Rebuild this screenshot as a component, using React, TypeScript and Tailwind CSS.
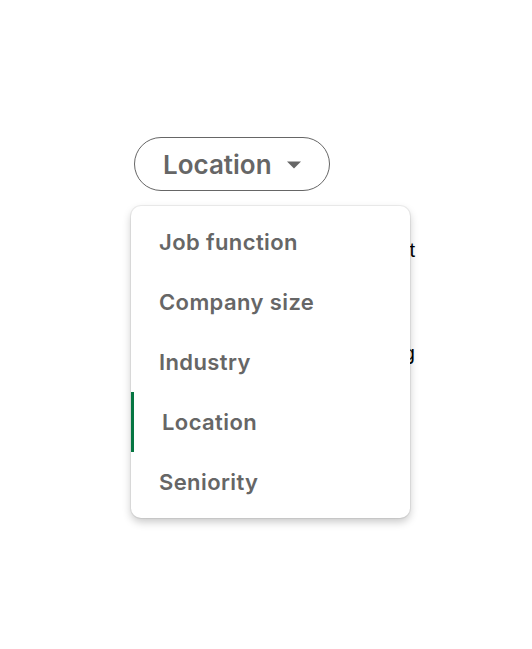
import React from 'react';

const filters = ['Job function', 'Company size', 'Industry', 'Location', 'Seniority'];

export default function App() {
  const active = 'Location';
  return (
    <div className="min-h-[649px] w-full bg-white font-['Inter',sans-serif] text-[#666666]">
      <div className="pl-[134px] pt-[137px]">
        <button className="flex h-[54px] w-[196px] items-center rounded-full border-[1.5px] border-[#666666] pl-[28px] text-[26px] font-semibold text-[#666666]">
          Location
          <svg width="14" height="8" viewBox="0 0 14 8" className="ml-[15px] mt-[1px]">
            <path d="M0 0.5h14L7 7.5z" fill="#666666" />
          </svg>
        </button>

        <div className="relative">
          {/* page copy sitting under the open menu */}
          <div className="w-[281px] whitespace-nowrap pt-[47px] text-right font-['Liberation_Sans',sans-serif] text-[20px] leading-[24px] text-black">
            <p>best</p>
            <p className="mt-[79px]">targeting</p>
          </div>

          <div className="absolute left-[-3px] top-[15px] w-[279px] rounded-[10px] bg-white py-[6px] shadow-[0_0_0_1px_rgba(0,0,0,0.06),0_4px_8px_rgba(0,0,0,0.22)]">
            {filters.map((f) => (
              <div
                key={f}
                className={
                  f === active
                    ? 'flex h-[60px] items-center border-l-[3px] border-[#057642] pl-[28px] text-[22px] font-semibold tracking-[0.4px]'
                    : 'flex h-[60px] items-center pl-[28px] text-[22px] font-semibold tracking-[0.4px]'
                }
              >
                {f}
              </div>
            ))}
          </div>
        </div>
      </div>
    </div>
  );
}
